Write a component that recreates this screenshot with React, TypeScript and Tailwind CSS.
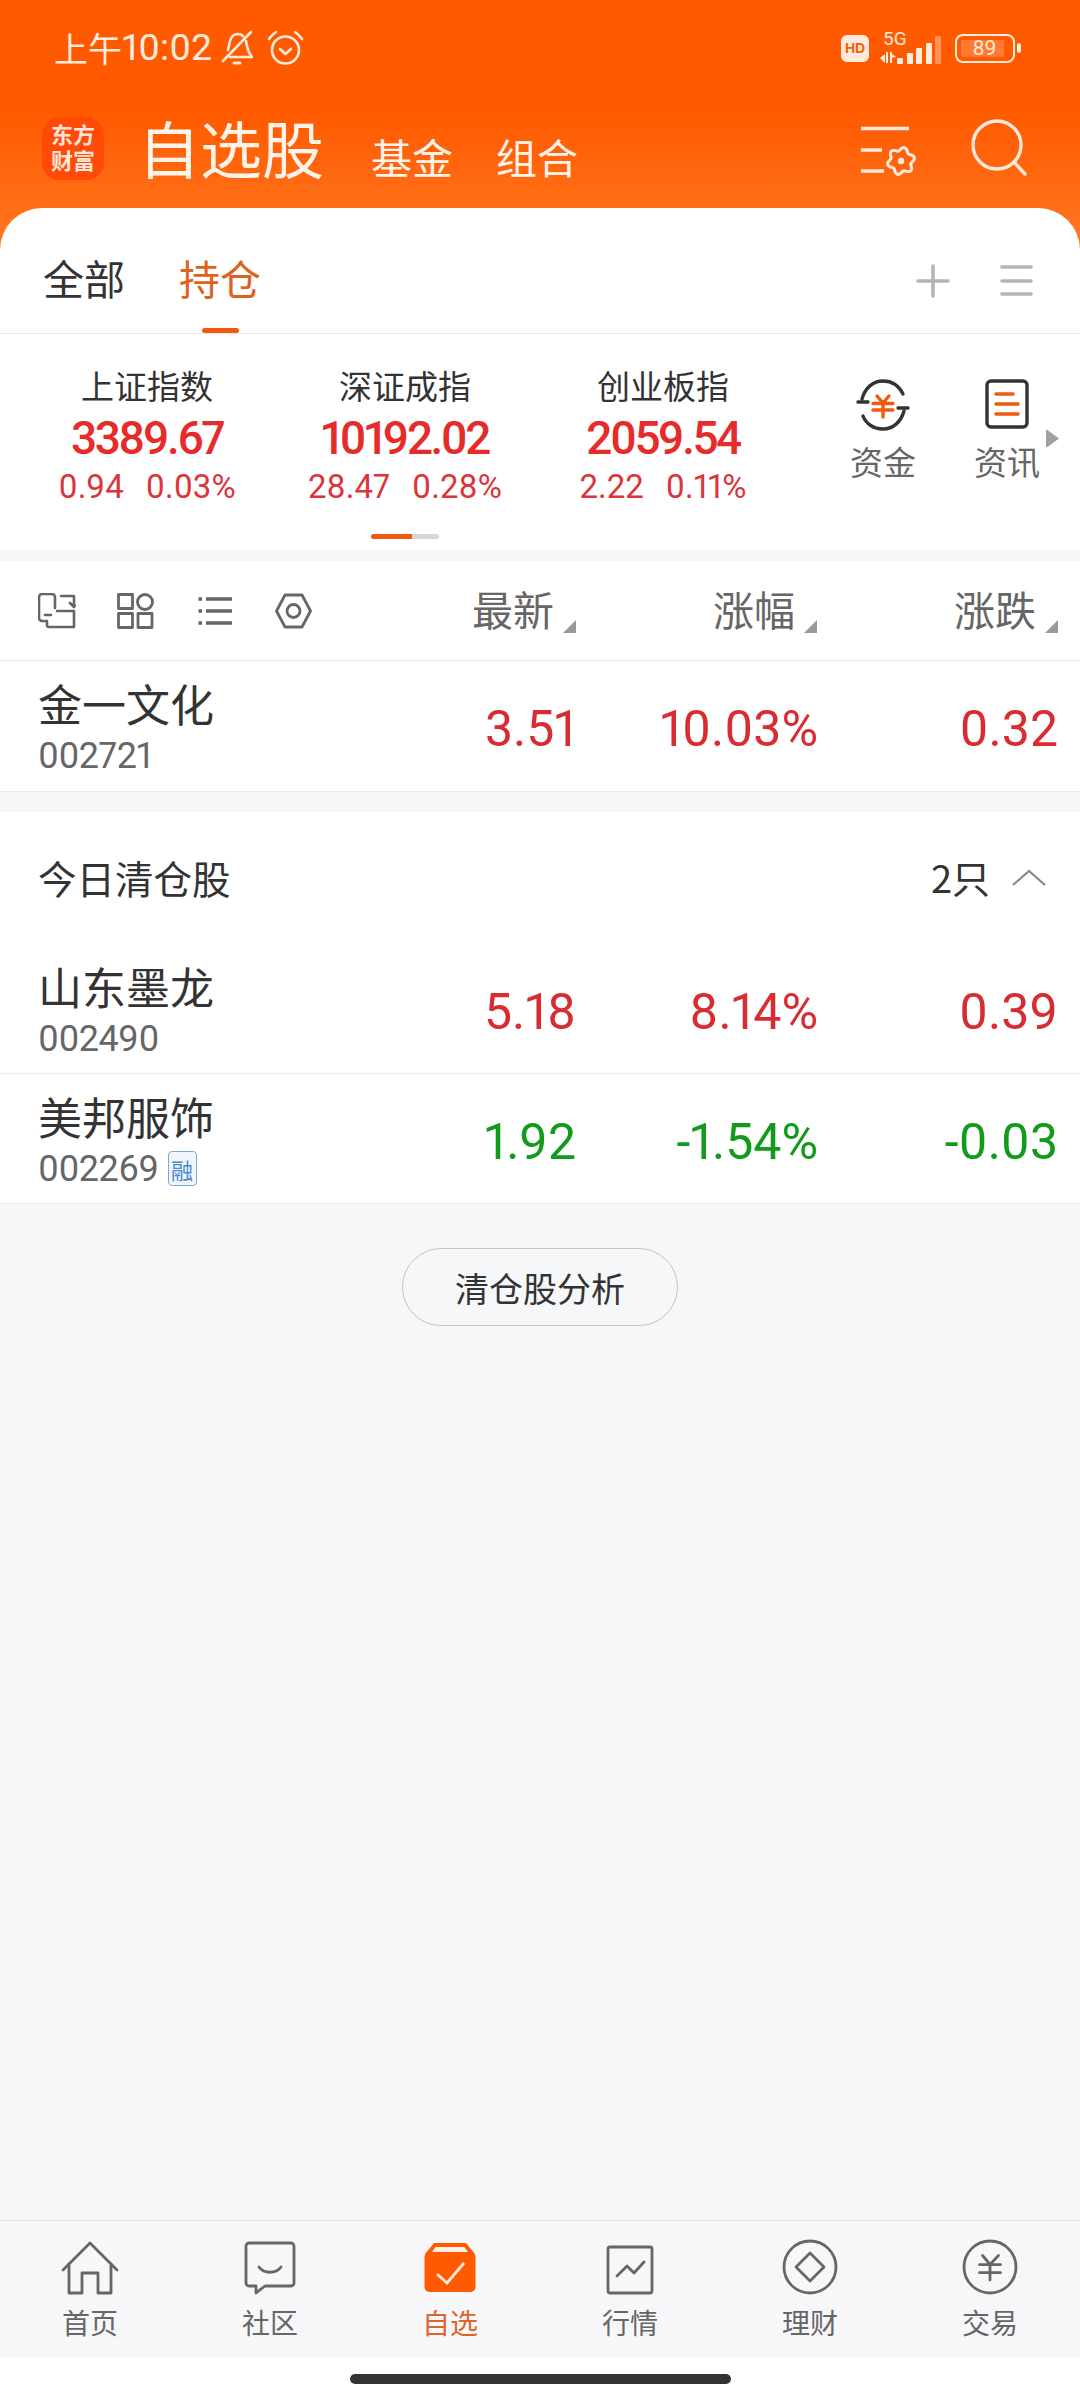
const CJK = "font-['Noto_Sans_CJK_SC',sans-serif]";
const NUM = "font-['Roboto','Noto_Sans_CJK_SC',sans-serif] proportional-nums";

const INDEXES = [
  { name: "上证指数", price: "3389.67", chg: "0.94", pct: "0.03%" },
  { name: "深证成指", price: "10192.02", chg: "28.47", pct: "0.28%" },
  { name: "创业板指", price: "2059.54", chg: "2.22", pct: "0.11%" },
];

const flowerPath = (cx: number, cy: number) => {
  const pts: string[] = [];
  for (let i = 0; i < 72; i++) {
    const a = (i / 72) * Math.PI * 2;
    const r = 12 + 1.8 * Math.cos(6 * a + Math.PI / 2);
    pts.push(`${(cx + r * Math.cos(a)).toFixed(1)} ${(cy + r * Math.sin(a)).toFixed(1)}`);
  }
  return `M${pts.join("L")}Z`;
};

function StatusBar() {
  return (
    <div className="flex h-[98px] items-center pl-[54px] pr-[59px] pb-[2px] text-[#ffeadd]">
      <span className={`${CJK} text-[34px] leading-none`}>上午</span>
      <span className={`${NUM} text-[37.5px] leading-none`}>10:02</span>
      <svg className="ml-[9px]" width="32" height="36" viewBox="0 0 32 36" fill="none" stroke="currentColor" strokeWidth="2.6" strokeLinecap="round" strokeLinejoin="round">
        <path d="M7 20c1-3 1-6 2-9 1-4 4-7 8-7 2 0 4 1 5 2" />
        <path d="M25 11c1 5 1 10 6 16H9" />
        <path d="M30 2 2 31" />
        <path d="M13 33h6" strokeWidth="3" />
      </svg>
      <svg className="ml-[14px]" width="37" height="36" viewBox="0 0 37 36" fill="none" stroke="currentColor" strokeWidth="2.6" strokeLinecap="round" strokeLinejoin="round">
        <circle cx="18.5" cy="20" r="13.5" />
        <path d="M13 19l5.5 5 5.5-5" />
        <path d="M2 9c2-3 4-5 7-7M35 9c-2-3-4-5-7-7" />
      </svg>
      <div className="ml-auto flex items-center">
        <span className="flex h-[27px] w-[28px] items-center justify-center rounded-[6px] bg-[#ffeadd] font-['Liberation_Sans',sans-serif] text-[14px] font-bold leading-none text-[#ff5a00]">HD</span>
        <div className="relative ml-[11px] h-[31px] w-[62px]">
          <span className={`${NUM} absolute left-[3px] top-[-4px] text-[19px] leading-[19px]`}>5G</span>
          <svg className="absolute left-0 top-0" width="62" height="31" viewBox="0 0 62 31" fill="currentColor">
            <path d="M0 25l5-4v9zM6 19h2v11H6zM10 19h2v11h-2zM12 21l4 3-4 1z" />
            <rect x="17" y="25" width="6" height="6" rx="1" />
            <rect x="27" y="20" width="6" height="11" rx="1" />
            <rect x="36" y="15" width="6" height="16" rx="1" />
            <rect x="46" y="10" width="6" height="21" rx="1" />
            <rect x="55" y="3" width="6" height="28" rx="1" opacity="0.4" />
          </svg>
        </div>
        <div className="ml-[13px] flex h-[29px] w-[60px] items-center rounded-[8px] border-[2.5px] border-[#ffeadd] pl-[4px]">
          <span className={`${NUM} flex h-[17px] w-[43px] items-center justify-center rounded-[2px] bg-white/20 pl-[4px] text-[21px] leading-none`}>89</span>
        </div>
        <span className="ml-[2px] h-[10px] w-[4px] rounded-full bg-[#ffeadd]" />
      </div>
    </div>
  );
}

function NavBar() {
  return (
    <div className="flex h-[110px] items-start pl-[42px] pr-[53px] pt-[19px] text-[#fff3ea]">
      <div className="flex h-[63px] w-[62px] flex-col items-center justify-center rounded-[18px] bg-[#ff4a08] font-['Liberation_Sans','Noto_Sans_CJK_SC',sans-serif] text-[22px] font-bold leading-[26px] text-[#ffe6d8]">
        <span className="h-[26px]">东方</span>
        <span className="h-[26px]">财富</span>
      </div>
      <div className={`${CJK} ml-[34px] mt-[-2px] flex items-baseline`}>
        <span className="text-[62px] leading-[64px]">自选股</span>
        <span className="ml-[47px] text-[41px] leading-[64px]">基金</span>
        <span className="ml-[43px] text-[41px] leading-[64px]">组合</span>
      </div>
      <div className="ml-auto flex items-start">
        <svg className="mt-[2px]" width="60" height="62" viewBox="0 0 60 62" fill="none" stroke="#ffe9dc" strokeWidth="3.4">
          <path d="M2 9.5h48M2 31h21M2 52h23" />
          <path d={flowerPath(42, 42)} strokeLinejoin="round" strokeWidth="3" />
          <circle cx="42" cy="42" r="3.2" fill="#ffe9dc" stroke="none" />
        </svg>
        <svg className="ml-[52px] mt-[2px]" width="56" height="58" viewBox="0 0 56 58" fill="none" stroke="#ffe9dc" strokeWidth="3.4" strokeLinecap="round">
          <circle cx="26" cy="26" r="24" />
          <path d="M43 43l11 12" />
        </svg>
      </div>
    </div>
  );
}

function TabsRow() {
  return (
    <div className={`${CJK} flex h-[126px] items-start rounded-t-[42px] border-b-[1.5px] border-[#e8e8ea] bg-white pl-[43px] pr-[47px] text-[41px] leading-[50px]`}>
      <span className="mt-[44px] text-[#333333]">全部</span>
      <div className="ml-[54px] flex flex-col items-center">
        <span className="mt-[44px] text-[#e0601e]">持仓</span>
        <span className="mt-[26px] h-[5px] w-[37px] rounded-full bg-[#f05a10]" />
      </div>
      <div className="ml-auto mt-[56px] flex items-start">
        <svg width="34" height="34" viewBox="0 0 34 34" stroke="#b5b5b5" strokeWidth="3.6" strokeLinecap="round">
          <path d="M17 2v30M2 17h30" />
        </svg>
        <svg className="ml-[50px]" width="33" height="34" viewBox="0 0 33 34" stroke="#b5b5b5" strokeWidth="3.6" strokeLinecap="round">
          <path d="M2 3h29M2 17h29M2 30h29" />
        </svg>
      </div>
    </div>
  );
}

function IndexStrip() {
  return (
    <div className="relative h-[216px] bg-white">
      <div className="flex pl-[18px] pt-[31px]">
        {INDEXES.map((item) => (
          <div key={item.name} className="flex w-[258px] flex-col items-center">
            <span className={`${CJK} text-[33px] leading-[40px] text-[#333333]`}>{item.name}</span>
            <span className={`${NUM} mt-[10px] text-[46px] font-medium leading-[46px] tracking-[-2.5px] text-[#e62b2b]`}>{item.price}</span>
            <div className={`${NUM} mt-[8px] flex gap-[22px] text-[33px] leading-[36px] text-[#d9353a]`}>
              <span>{item.chg}</span>
              <span>{item.pct}</span>
            </div>
          </div>
        ))}
        <div className="ml-[29px] flex w-[124px] flex-col items-center pt-[13px]">
          <svg width="54" height="54" viewBox="0 0 54 54" fill="none" strokeLinecap="round">
            <path d="M6 21C9 10 17 3 27 3c9 0 16 5 20 13M48 33c-3 11-11 18-21 18-9 0-17-5-20-13" stroke="#333333" strokeWidth="3.4" />
            <path d="M2 24h10M52 30H42" stroke="#333333" strokeWidth="3.4" />
            <path d="M21 18l6 7 6-7M17 25.500h20M17 32h20M27 25v14" stroke="#f05a10" strokeWidth="3.4" />
          </svg>
          <span className={`${CJK} mt-[9px] text-[33px] leading-[40px] text-[#666666]`}>资金</span>
        </div>
        <div className="flex w-[124px] flex-col items-center pt-[13px]">
          <svg width="44" height="54" viewBox="0 0 44 54" fill="none" strokeLinecap="round">
            <rect x="2" y="3" width="40" height="46" rx="4" stroke="#333333" strokeWidth="3.4" />
            <path d="M11 16h17M11 26h22M11 36h22" stroke="#f05a10" strokeWidth="3.6" />
          </svg>
          <span className={`${CJK} mt-[9px] text-[33px] leading-[40px] text-[#666666]`}>资讯</span>
        </div>
      </div>
      <span className="absolute left-[1046px] top-[95px] h-[19px] w-[13px] rounded-[2px] bg-[#a0a0a0] [clip-path:polygon(0_0,100%_50%,0_100%)]" />
      <div className="absolute bottom-[11px] left-[371px] flex h-[5px] w-[68px] overflow-hidden rounded-full bg-[#d6d6d8]">
        <span className="h-full w-[41px] bg-[#f05a10]" />
      </div>
    </div>
  );
}

function SortLabel({ label, width }: { label: string; width: string }) {
  return (
    <div className={`flex justify-end ${width}`}>
      <span className={`${CJK} mt-[-5px] text-[41px] leading-[50px] text-[#666666]`}>{label}</span>
      <svg className="ml-[9px] self-end" width="13" height="13" viewBox="0 0 13 13" fill="#9a9a9e">
        <path d="M13 0v13H0z" />
      </svg>
    </div>
  );
}

function Toolbar() {
  return (
    <div className="flex h-[100px] items-center border-b-[1.5px] border-[#ececee] bg-white pl-[38px] pr-[22px]">
      <div className="flex flex-1 items-center text-[#666666]">
        <svg width="38" height="36" viewBox="0 0 38 36" fill="none" stroke="currentColor" strokeWidth="2.6" strokeLinejoin="round" strokeLinecap="round">
          <path d="M17 15V4a3 3 0 0 0-3-3H4a3 3 0 0 0-3 3v21a3 3 0 0 0 3 3h4" />
          <path d="M7 22h6" />
          <path d="M23 3h13v10M32 10l4 4 1-1.500" />
          <path d="M19 18h17v16H11a2 2 0 0 1-2-2v-4" />
        </svg>
        <svg className="ml-[41px]" width="37" height="36" viewBox="0 0 37 36" fill="none" stroke="currentColor" strokeWidth="2.8" strokeLinejoin="round">
          <rect x="1.500" y="1.500" width="14" height="14" />
          <circle cx="28" cy="9" r="7.500" />
          <rect x="1.500" y="20.500" width="14" height="14" />
          <rect x="21" y="20.500" width="14" height="14" />
        </svg>
        <svg className="ml-[44px]" width="34" height="30" viewBox="0 0 34 30" fill="none" stroke="currentColor" strokeWidth="3.4">
          <path d="M8 3h26M8 15h26M8 27h26" />
          <path d="M0.500 3h3.500M0.500 15h3.500M0.500 27h3.500" strokeWidth="3.6" />
        </svg>
        <svg className="ml-[43px]" width="37" height="36" viewBox="0 0 37 36" fill="none" stroke="currentColor" strokeWidth="2.8" strokeLinejoin="round">
          <path d="M10 2h17l8.500 16L27 34H10L1.500 18z" />
          <circle cx="18.500" cy="18" r="6.500" />
        </svg>
      </div>
      <SortLabel label="最新" width="w-[200px]" />
      <SortLabel label="涨幅" width="w-[241px]" />
      <SortLabel label="涨跌" width="w-[241px]" />
    </div>
  );
}

type StockRowProps = {
  name: string;
  code: string;
  price: string;
  pct: string;
  chg: string;
  up: boolean;
  badge?: boolean;
  height: string;
  line: string;
};

function StockRow({ name, code, price, pct, chg, up, badge, height, line }: StockRowProps) {
  const tone = up ? "text-[#d92c32]" : "text-[#119a1b]";
  return (
    <div className={`flex items-center bg-white pl-[38px] pr-[22px] ${height} ${line}`}>
      <div className="flex flex-1 flex-col">
        <span className={`${CJK} text-[44px] leading-[54px] text-[#333333]`}>{name}</span>
        <div className="mt-[6px] flex items-center">
          <span className={`${NUM} text-[36px] leading-[40px] tracking-[-0.5px] text-[#666666]`}>{code}</span>
          {badge && (
            <span className={`${CJK} ml-[9px] flex h-[35px] w-[29px] items-center justify-center rounded-[4px] border-[1.5px] border-[#7fa8d8] bg-[#f0f6fc] text-[22px] leading-none text-[#4a8ad0]`}>融</span>
          )}
        </div>
      </div>
      <span className={`${NUM} mt-[6px] w-[200px] text-right text-[50px] leading-none ${tone}`}>{price}</span>
      <span className={`${NUM} mt-[6px] w-[242px] text-right text-[50px] leading-none ${tone}`}>{pct}</span>
      <span className={`${NUM} mt-[6px] w-[240px] text-right text-[50px] leading-none ${tone}`}>{chg}</span>
    </div>
  );
}

const TABS = [
  {
    label: "首页",
    icon: (
      <svg width="58" height="54" viewBox="0 0 58 54" fill="none" stroke="#666666" strokeWidth="2.8" strokeLinejoin="round" strokeLinecap="round">
        <path d="M2 29 29 2l27 27" />
        <path d="M8 23v29h13V32h16v20h13V23" />
      </svg>
    ),
  },
  {
    label: "社区",
    icon: (
      <svg width="52" height="54" viewBox="0 0 52 54" fill="none" stroke="#666666" strokeWidth="2.8" strokeLinejoin="round" strokeLinecap="round">
        <path d="M5 2h42a3 3 0 0 1 3 3v37a3 3 0 0 1-3 3H21L12 52v-7H5a3 3 0 0 1-3-3V5a3 3 0 0 1 3-3z" />
        <path d="M15 26c5 7 17 7 22 0" />
      </svg>
    ),
  },
  {
    label: "自选",
    active: true,
    icon: (
      <svg width="52" height="54" viewBox="0 0 52 54">
        <path d="M10 2h32l9 11H1z" fill="#ff5a00" />
        <path d="M11.500 6h29l3.500 5H8z" fill="#fff0e6" />
        <rect x="0.500" y="11" width="51" height="40" rx="5" fill="#ff5a00" />
        <path d="M13 33l10 9 17-20" fill="none" stroke="#ffe9dc" strokeWidth="2.8" />
      </svg>
    ),
  },
  {
    label: "行情",
    icon: (
      <svg width="48" height="50" viewBox="0 0 48 50" fill="none" stroke="#666666" strokeWidth="2.8" strokeLinejoin="round" strokeLinecap="round">
        <rect x="2" y="2" width="44" height="46" rx="2" />
        <path d="M11 31l10-10 7 7 10-11" />
      </svg>
    ),
  },
  {
    label: "理财",
    icon: (
      <svg width="56" height="56" viewBox="0 0 56 56" fill="none" stroke="#666666" strokeWidth="2.8" strokeLinejoin="round">
        <circle cx="28" cy="28" r="26" />
        <path d="M28 14 42 28 28 42 14 28z" />
      </svg>
    ),
  },
  {
    label: "交易",
    icon: (
      <svg width="56" height="56" viewBox="0 0 56 56" fill="none" stroke="#666666" strokeWidth="2.8" strokeLinecap="round">
        <circle cx="28" cy="28" r="26" />
        <path d="M20.500 16.500 28 25.500l8.500-9M17.500 25.600h21M17.500 33.700h21M28 25.500V41" />
      </svg>
    ),
  },
];

function BottomTabs() {
  return (
    <div className="grid h-[138px] grid-cols-6 border-t-[1.5px] border-[#e3e3e8] bg-[#f7f7fa]">
      {TABS.map((tab) => (
        <div key={tab.label} className="flex flex-col items-center">
          <div className="flex h-[86px] items-end pb-[12px]">{tab.icon}</div>
          <span className={`${CJK} mt-[-2px] text-[28px] leading-[34px] ${tab.active ? "text-[#d9662a]" : "text-[#666666]"}`}>{tab.label}</span>
        </div>
      ))}
    </div>
  );
}

export default function App() {
  return (
    <div className="flex h-[2400px] w-[1080px] flex-col overflow-hidden bg-white">
      <div className="bg-[linear-gradient(180deg,#ff5a00_0,#ff5a00_110px,#ff7a24_260px)]">
        <StatusBar />
        <NavBar />
        <TabsRow />
      </div>
      <IndexStrip />
      <div className="flex flex-1 flex-col bg-[#f6f7f9]">
        <div className="mt-[11px]">
          <Toolbar />
          <StockRow name="金一文化" code="002721" price="3.51" pct="10.03%" chg="0.32" up height="h-[131px]" line="border-b-[1.5px] border-[#ececee]" />
        </div>
        <div className="mt-[20px]">
          <div className="flex h-[132px] items-center bg-white pb-[2px] pl-[38px] pr-[34px]">
            <span className={`${CJK} text-[38.5px] leading-none text-[#333333]`}>今日清仓股</span>
            <span className={`${CJK} ml-auto text-[38px] leading-none text-[#333333]`}>2只</span>
            <svg className="ml-[22px]" width="34" height="18" viewBox="0 0 34 18" fill="none" stroke="#888888" strokeWidth="2.2">
              <path d="M1 17 17 3l16 14" />
            </svg>
          </div>
          <StockRow name="山东墨龙" code="002490" price="5.18" pct="8.14%" chg="0.39" up height="h-[130px]" line="border-b-[1.5px] border-[#ececee]" />
          <StockRow name="美邦服饰" code="002269" price="1.92" pct="-1.54%" chg="-0.03" up={false} badge height="h-[130px]" line="border-b-[1.5px] border-[#ececee]" />
        </div>
        <div className="mt-[44px] flex justify-center">
          <span className={`${CJK} flex h-[78px] w-[276px] items-center justify-center rounded-full border-[1.5px] border-[#c4c4c6] text-[34px] text-[#333333]`}>清仓股分析</span>
        </div>
      </div>
      <BottomTabs />
      <div className="flex h-[42px] justify-center bg-white pt-[16px]">
        <span className="h-[10px] w-[381px] rounded-full bg-[#333333]" />
      </div>
    </div>
  );
}
